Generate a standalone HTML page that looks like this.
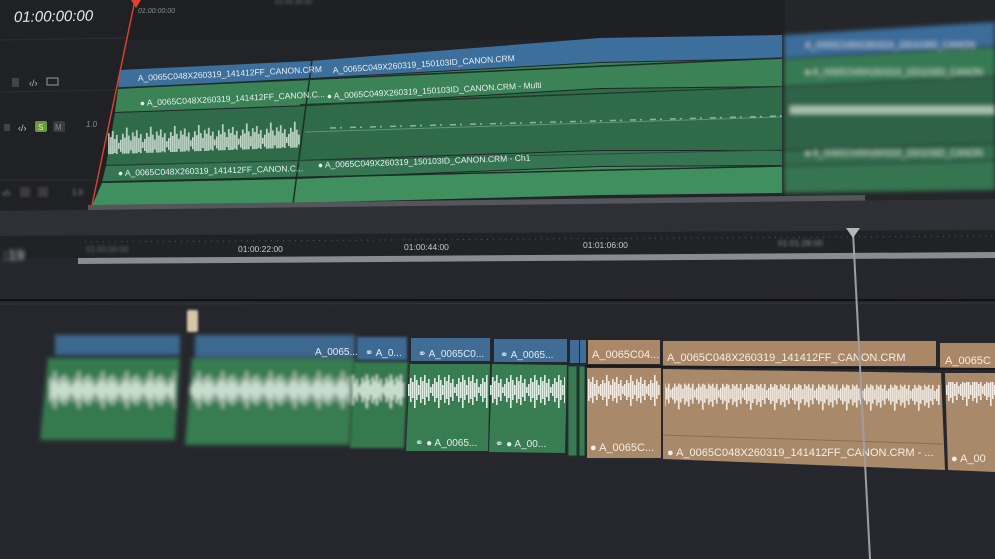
<!DOCTYPE html>
<html><head><meta charset="utf-8"><style>
html,body{margin:0;padding:0;background:#26272c;}
svg{display:block}
text{font-family:"Liberation Sans",sans-serif;}
</style></head><body>
<svg width="995" height="559" viewBox="0 0 995 559" xmlns="http://www.w3.org/2000/svg">
<defs>
<pattern id="wv" width="24" height="60" patternUnits="userSpaceOnUse">
<g fill="#dfeee3">
<rect x="0" y="24" width="1.6" height="12"/><rect x="2" y="18" width="1.6" height="24"/><rect x="4" y="22" width="1.6" height="16"/><rect x="6" y="12" width="1.6" height="36"/><rect x="8" y="20" width="1.6" height="20"/><rect x="10" y="25" width="1.6" height="10"/><rect x="12" y="17" width="1.6" height="26"/><rect x="14" y="21" width="1.6" height="18"/><rect x="16" y="15" width="1.6" height="30"/><rect x="18" y="23" width="1.6" height="14"/><rect x="20" y="19" width="1.6" height="22"/><rect x="22" y="27" width="1.6" height="6"/>
</g></pattern>
<pattern id="wvo" width="24" height="60" patternUnits="userSpaceOnUse">
<g fill="#f4ece2">
<rect x="0" y="24" width="1.6" height="12"/><rect x="2" y="20" width="1.6" height="20"/><rect x="4" y="23" width="1.6" height="14"/><rect x="6" y="14" width="1.6" height="32"/><rect x="8" y="21" width="1.6" height="18"/><rect x="10" y="25" width="1.6" height="10"/><rect x="12" y="19" width="1.6" height="22"/><rect x="14" y="22" width="1.6" height="16"/><rect x="16" y="17" width="1.6" height="26"/><rect x="18" y="24" width="1.6" height="12"/><rect x="20" y="20" width="1.6" height="20"/><rect x="22" y="26" width="1.6" height="8"/>
</g></pattern>
<filter id="b1"><feGaussianBlur stdDeviation="1.2"/></filter>
<filter id="b2"><feGaussianBlur stdDeviation="2.2"/></filter>
</defs>

<!-- top panel bg -->
<rect x="0" y="0" width="995" height="202" fill="#232428"/>
<rect x="0" y="0" width="995" height="40" fill="#1f2024"/>
<rect x="785" y="0" width="210" height="202" fill="#25262a"/>
<polygon points="0,0 130,0 100,210 0,210" fill="#202125"/>
<line x1="0" y1="40" x2="125" y2="38" stroke="#2d2e33"/>
<line x1="0" y1="92" x2="115" y2="90" stroke="#2d2e33"/>
<line x1="0" y1="180" x2="100" y2="180" stroke="#2d2e33"/>
<text x="14" y="22" fill="#e8e8ea" font-size="15" font-style="italic" transform="rotate(-1 14 22)">01:00:00:00</text>
<text x="138" y="13" fill="#8a8b90" font-size="7" font-style="italic">01:00:00:00</text>
<text x="275" y="4" fill="#6a6b70" font-size="7" filter="url(#b1)">01:05:38:00</text>

<!-- track header icons -->
<g fill="#8a8b90" font-size="9">
<rect x="12" y="78" width="7" height="9" fill="#444"/>
<text x="29" y="86" fill="#bbb">‹/›</text>
<rect x="47" y="78" width="11" height="7" fill="none" stroke="#999"/>
<rect x="4" y="124" width="6" height="7" fill="#444"/>
<text x="18" y="131" fill="#ccc">‹/›</text>
<rect x="35" y="121" width="12" height="11" rx="2" fill="#6a9a35"/><text x="38" y="130" fill="#e8f0d8" font-size="8">S</text>
<rect x="53" y="121" width="12" height="11" rx="2" fill="#3a3b40"/><text x="55" y="130" fill="#888" font-size="8">M</text>
<text x="86" y="127" font-size="8" font-style="italic">1.0</text>
<g filter="url(#b1)"><text x="2" y="196" fill="#999">‹/›</text><rect x="20" y="187" width="10" height="10" fill="#3a3b40"/><rect x="38" y="187" width="10" height="10" fill="#3a3b40"/><text x="72" y="195" font-size="8">1.0</text></g>
</g>

<!-- top clips main (left of 782) -->
<polygon points="120,70 310,61 600,38 782,35 782,58 600,62 310,78 118,88" fill="#3d6f9c"/>
<polygon points="118,89 310,79 600,63 782,59 782,86 600,88 310,105 115,112" fill="#3b8257"/>
<polygon points="115,113 310,106 600,89 782,87 782,150 600,150 300,160 106,165" fill="#2f6a49"/>
<polygon points="106,166 300,161 600,151 782,151 782,165 600,166 297,178 102,182" fill="#357552"/>
<polygon points="102,183 297,179 600,167 782,166 782,193 600,195 293,203 92,206" fill="#40905f"/>
<polygon points="300,104 782,86 782,87 300,106" fill="#1f3a29"/>
<line x1="312" y1="60" x2="293" y2="204" stroke="#1d2e24" stroke-width="1.5"/>
<line x1="118" y1="88" x2="782" y2="58" stroke="#1d2e24" stroke-width="1.5"/>
<line x1="106" y1="165" x2="782" y2="150" stroke="#24503a" stroke-width="1"/>
<line x1="102" y1="182" x2="782" y2="166" stroke="#1d2e24" stroke-width="1.5"/>
<rect x="108" y="122" width="192" height="36" fill="url(#wv)" transform="skewY(-2)" opacity="0.85"/>
<line x1="305" y1="132" x2="782" y2="117" stroke="#8fbfa0" stroke-width="1" opacity="0.5"/>
<line x1="330" y1="128" x2="782" y2="116" stroke="#cfe5d5" stroke-width="1.5" stroke-dasharray="6 4 2 8" opacity="0.6"/>
<!-- right blurred region -->
<g filter="url(#b2)">
<polygon points="784,35 995,22 995,46 784,58" fill="#3a6c9a"/>
<polygon points="784,59 995,47 995,76 784,86" fill="#357a52"/>
<polygon points="784,87 995,77 995,143 784,150" fill="#2d6446"/>
<polygon points="784,151 995,144 995,160 784,165" fill="#336f4d"/>
<polygon points="784,166 995,161 995,190 784,193" fill="#35754f"/>
<rect x="790" y="106" width="205" height="8" fill="#d8e8dc" opacity="0.7"/>
<text x="805" y="48" fill="#c9d6e6" font-size="9">A_0065C049X260319_150103ID_CANON</text>
<text x="805" y="75" fill="#c9dcd0" font-size="9">● A_0065C049X260319_150103ID_CANON</text>
<text x="805" y="156" fill="#c9dcd0" font-size="9">● A_0065C049X260319_150103ID_CANON</text>
</g>
<g fill="#e6eef0" font-size="8.5">
<text x="138" y="81" transform="rotate(-2.8 138 81)">A_0065C048X260319_141412FF_CANON.CRM</text>
<text x="333" y="73" transform="rotate(-3.8 333 73)">A_0065C049X260319_150103ID_CANON.CRM</text>
<text x="140" y="106" transform="rotate(-2.8 140 106)">● A_0065C048X260319_141412FF_CANON.C...</text>
<text x="327" y="99" transform="rotate(-3 327 99)">● A_0065C049X260319_150103ID_CANON.CRM - Multi</text>
<text x="118" y="176" transform="rotate(-1.5 118 176)">● A_0065C048X260319_141412FF_CANON.C...</text>
<text x="318" y="168" transform="rotate(-2 318 168)">● A_0065C049X260319_150103ID_CANON.CRM - Ch1</text>
</g>
<line x1="135" y1="0" x2="91" y2="210" stroke="#e0412f" stroke-width="1.4"/>
<polygon points="131,0 141,0 136,8" fill="#e0412f"/>
<polygon points="88,205 865,195 865,201 88,211" fill="#55565b"/>
<polygon points="0,211 995,199 995,230 0,236" fill="#2f3035"/>

<!-- ruler -->
<polygon points="0,236 995,230 995,256 0,258" fill="#212226"/>
<line x1="85" y1="242" x2="995" y2="236" stroke="#55565b" stroke-dasharray="1 5"/>
<text x="3" y="260" fill="#9a9ba0" font-size="15" font-weight="bold" filter="url(#b2)">:19</text>
<text x="86" y="252" fill="#666" font-size="8" filter="url(#b1)">01:00:00:00</text>
<text x="238" y="252" fill="#c9c9cc" font-size="8.5">01:00:22:00</text>
<text x="404" y="250" fill="#c9c9cc" font-size="8.5">01:00:44:00</text>
<text x="583" y="248" fill="#c9c9cc" font-size="8.5">01:01:06:00</text>
<text x="778" y="246" fill="#888" font-size="8.5" filter="url(#b1)">01:01:28:00</text>
<polygon points="78,258 995,252 995,258 78,264" fill="#8b8c90"/>

<!-- lower bg lines -->
<line x1="0" y1="300" x2="995" y2="300" stroke="#111" stroke-width="2"/>
<line x1="0" y1="304" x2="995" y2="303" stroke="#34353a"/>
<rect x="187" y="310" width="11" height="22" rx="2" fill="#d6c8a6" filter="url(#b1)"/>

<!-- lower blurred clips left -->
<g filter="url(#b2)">
<rect x="55" y="335" width="125" height="20" fill="#3d6890"/>
<rect x="195" y="335" width="160" height="22" fill="#3d6890"/>
<polygon points="48,358 180,358 175,440 40,440" fill="#367a50"/>
<polygon points="192,358 355,358 350,445 185,445" fill="#377c51"/>
<rect x="50" y="370" width="125" height="45" fill="url(#wv)"/>
<rect x="190" y="370" width="160" height="45" fill="url(#wv)"/>
</g>
<g filter="url(#b1)">
<rect x="357" y="337" width="50" height="23" fill="#3e6b94"/>
<polygon points="354,362 408,362 404,448 350,448" fill="#367a50"/>
<rect x="352" y="375" width="52" height="45" fill="url(#wv)"/>
</g>
<rect x="411" y="338" width="79" height="23" fill="#3f6d96"/>
<rect x="494" y="339" width="73" height="23" fill="#3f6d96"/>
<rect x="570" y="340" width="9" height="23" fill="#3f6d96"/>
<rect x="580" y="340" width="6" height="23" fill="#3f6d96"/>
<polygon points="410,364 490,364 488,451 406,451" fill="#387d52"/>
<polygon points="492,364 567,365 565,453 489,452" fill="#397e53"/>
<rect x="568" y="366" width="9" height="90" fill="#3a7a52" stroke="#1f3a28"/>
<rect x="579" y="366" width="6" height="90" fill="#3a7a52" stroke="#1f3a28"/>
<rect x="408" y="375" width="80" height="50" fill="url(#wv)"/>
<rect x="490" y="375" width="75" height="50" fill="url(#wv)"/>
<g fill="#e4ebf0" font-size="10">
<text x="315" y="355">A_0065...</text>
<text x="365" y="356">⚭ A_0...</text>
<text x="418" y="357">⚭ A_0065C0...</text>
<text x="500" y="358">⚭ A_0065...</text>
<text x="415" y="446">⚭ ● A_0065...</text>
<text x="495" y="447">⚭ ● A_00...</text>
</g>

<!-- orange clips -->
<rect x="588" y="340" width="72" height="24" fill="#a98767"/>
<rect x="663" y="341" width="273" height="25" fill="#a98767"/>
<rect x="940" y="343" width="55" height="25" fill="#a98767"/>
<line x1="585" y1="366" x2="995" y2="369" stroke="#1a1a1c" stroke-width="2"/>
<rect x="587" y="368" width="74" height="90" fill="#a8896a"/>
<polygon points="663,369 941,373 945,470 663,459" fill="#a8896a"/>
<polygon points="945,373 995,373 995,472 948,470" fill="#a8896a"/>
<rect x="588" y="375" width="72" height="50" fill="url(#wvo)"/>
<rect x="665" y="380" width="275" height="50" fill="url(#wvo)" transform="skewY(0.3)"/>
<rect x="946" y="382" width="49" height="50" fill="url(#wvo)"/>
<line x1="663" y1="435" x2="943" y2="444" stroke="#8a6e52"/>
<g fill="#f5eee6" font-size="11">
<text x="592" y="358">A_0065C04...</text>
<text x="667" y="361">A_0065C048X260319_141412FF_CANON.CRM</text>
<text x="945" y="364">A_0065C</text>
<text x="590" y="451">● A_0065C...</text>
<text x="667" y="456">● A_0065C048X260319_141412FF_CANON.CRM - ...</text>
<text x="951" y="462">● A_00</text>
</g>

<!-- grey playhead -->
<line x1="853" y1="232" x2="870" y2="559" stroke="#9d9ea2" stroke-width="2"/>
<polygon points="846,228 860,228 853,238" fill="#b5b6ba"/>
</svg>
</body></html>
